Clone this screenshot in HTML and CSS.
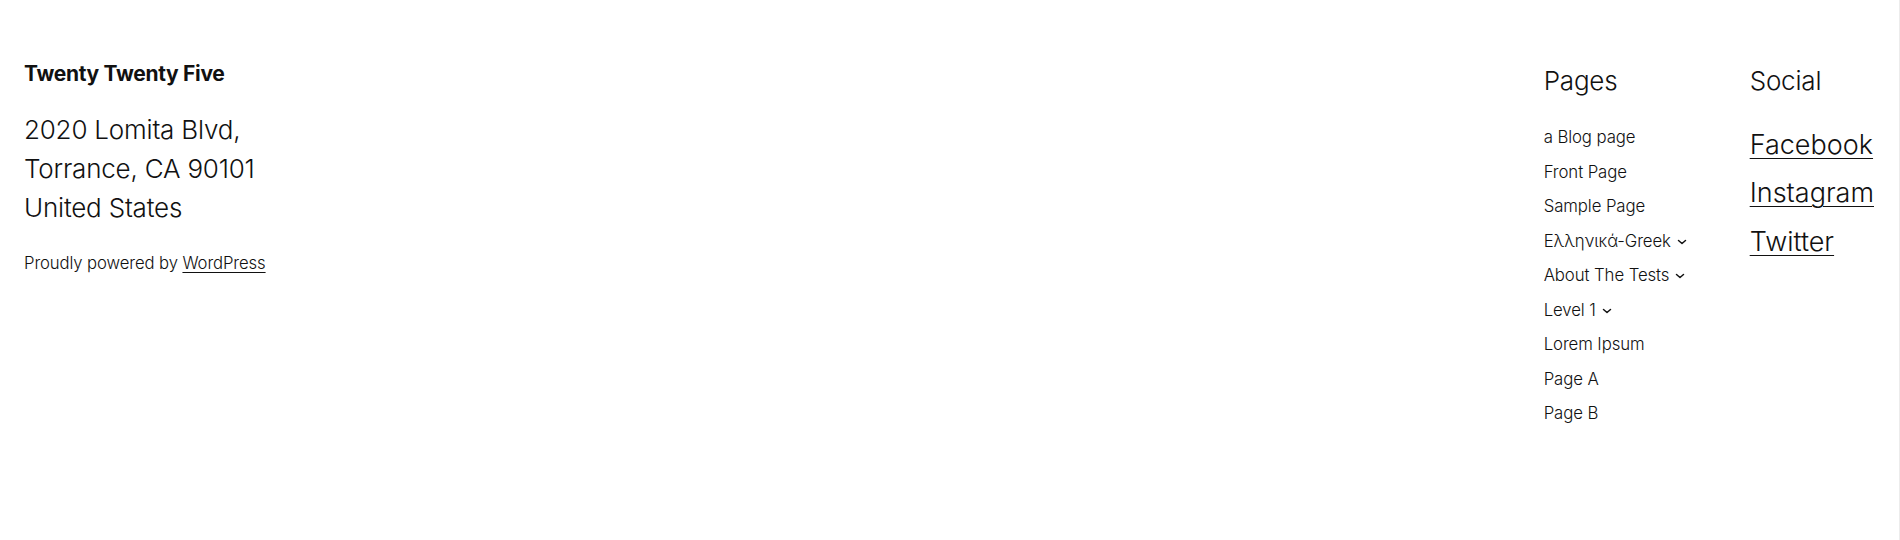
FILE: index.html
```html
<!DOCTYPE html>
<html lang="en">
<head>
<meta charset="utf-8">
<title>Twenty Twenty Five</title>
<link rel="stylesheet" href="styles.css">
</head>
<body>
<footer class="site-footer">
  <div class="brand">
    <p class="site-title">Twenty Twenty Five</p>
    <p class="address">2020 Lomita Blvd,<br>Torrance, CA 90101<br>United States</p>
    <p class="credit">Proudly powered by <a href="#">WordPress</a></p>
  </div>
  <div class="columns">
    <nav class="col col-pages">
      <h2 class="col-title">Pages</h2>
      <ul class="page-list">
        <li><a href="#">a Blog page</a></li>
        <li><a href="#">Front Page</a></li>
        <li><a href="#">Sample Page</a></li>
        <li><a href="#">Ελληνικά-Greek</a><svg class="chev" viewBox="0 0 10 6" aria-hidden="true"><path d="M1.5 1.5 L5 4.5 L8.5 1.5"/></svg></li>
        <li><a href="#">About The Tests</a><svg class="chev" viewBox="0 0 10 6" aria-hidden="true"><path d="M1.5 1.5 L5 4.5 L8.5 1.5"/></svg></li>
        <li><a href="#">Level 1</a><svg class="chev" viewBox="0 0 10 6" aria-hidden="true"><path d="M1.5 1.5 L5 4.5 L8.5 1.5"/></svg></li>
        <li><a href="#">Lorem Ipsum</a></li>
        <li><a href="#">Page A</a></li>
        <li><a href="#">Page B</a></li>
      </ul>
    </nav>
    <nav class="col col-social">
      <h2 class="col-title">Social</h2>
      <ul class="social-list">
        <li><a href="#">Facebook</a></li>
        <li><a href="#">Instagram</a></li>
        <li><a href="#">Twitter</a></li>
      </ul>
    </nav>
  </div>
</footer>
</body>
</html>
```
FILE: styles.css
```css
html, body {
  margin: 0;
  padding: 0;
  background: #ffffff;
}
body {
  font-family: Inter, "Noto Sans", "Liberation Sans", sans-serif;
  color: #111111;
  height: 540px;
  border-right: 1px solid #ececec;
  box-sizing: border-box;
}
.site-footer {
  display: flex;
  justify-content: space-between;
  align-items: flex-start;
  padding: 61px 25px 0 24px;
}
.brand p {
  margin: 0;
}
.site-title {
  font-size: 21px;
  font-weight: 700;
  line-height: 26px;
  letter-spacing: -0.3px;
}
.brand .address {
  margin-top: 23px;
  font-size: 26px;
  font-weight: 300;
  line-height: 39px;
  letter-spacing: -0.2px;
}
.brand .credit {
  margin-top: 24px;
  font-size: 16.7px;
  font-weight: 300;
  line-height: 24px;
  letter-spacing: -0.1px;
}
.credit a {
  color: #111111;
  text-decoration: underline;
  text-underline-offset: 3px;
  text-decoration-thickness: 1px;
}
.columns {
  display: flex;
  align-items: flex-start;
}
.col-pages {
  width: 206px;
}
.col-title {
  margin: 4px 0 0 0;
  font-size: 26px;
  font-weight: 300;
  line-height: 32px;
  letter-spacing: -0.2px;
}
.page-list,
.social-list {
  list-style: none;
  margin: 23px 0 0 0;
  padding: 0;
}
.page-list li {
  display: flex;
  align-items: center;
  height: 34.5px;
  font-size: 16.8px;
  font-weight: 300;
  letter-spacing: -0.1px;
}
.page-list a {
  color: #111111;
  text-decoration: none;
}
.chev {
  width: 10px;
  height: 6px;
  margin-left: 6px;
  margin-top: 2px;
  fill: none;
  stroke: #111111;
  stroke-width: 1.5;
  stroke-linecap: round;
  stroke-linejoin: round;
}
.social-list li {
  height: 48.5px;
  display: flex;
  align-items: center;
  font-size: 27px;
  font-weight: 300;
}
.social-list a {
  color: #111111;
  text-decoration: underline;
  text-underline-offset: 4px;
  text-decoration-thickness: 1px;
}
```
